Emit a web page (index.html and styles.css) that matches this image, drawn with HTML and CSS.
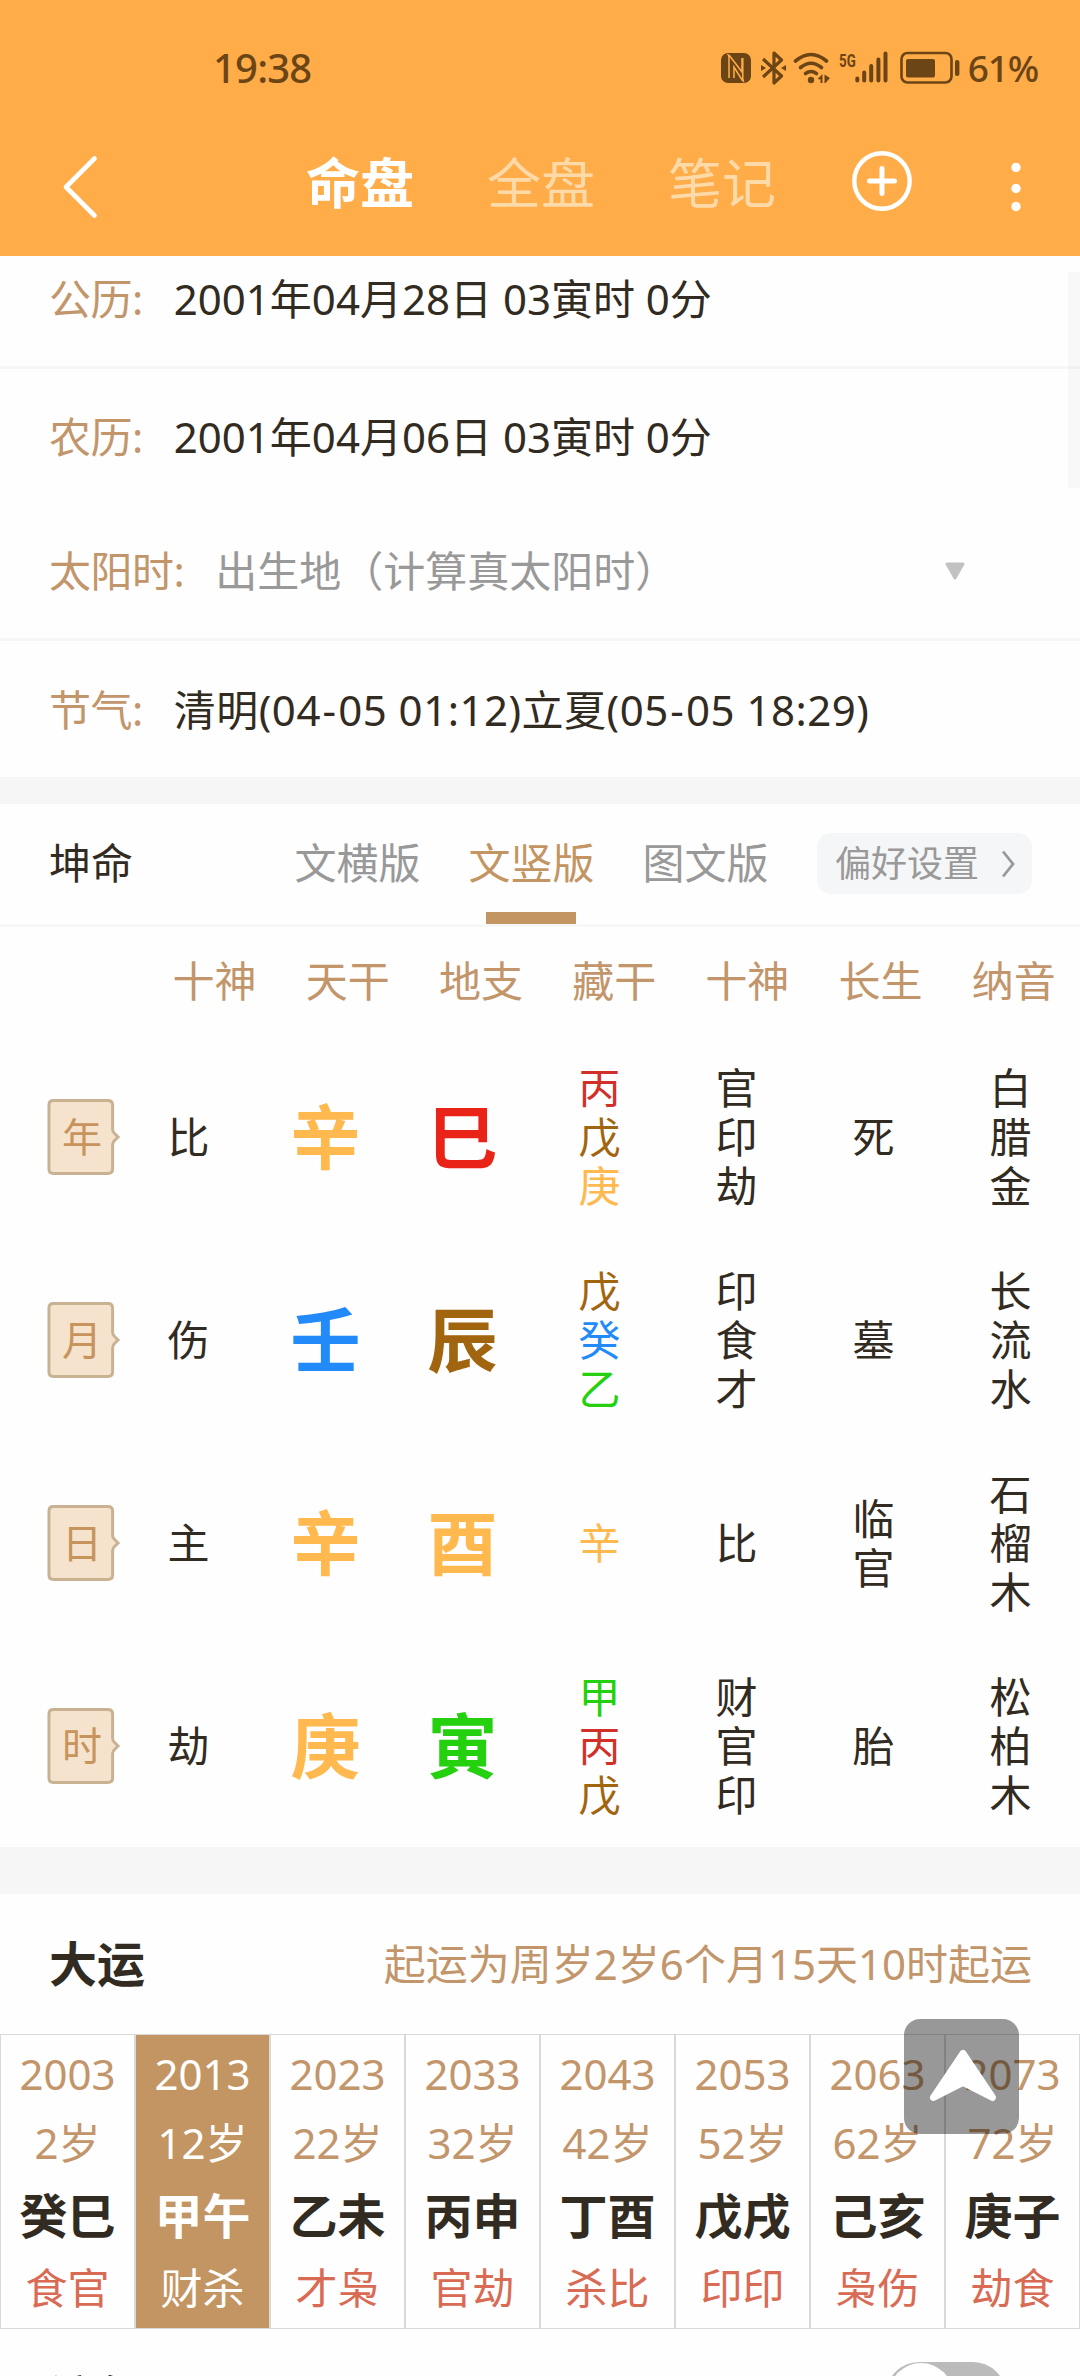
FILE: index.html
```html
<!DOCTYPE html>
<html lang="zh-CN">
<head>
<meta charset="utf-8">
<title>命盘</title>
<link rel="stylesheet" href="styles.css">
</head>
<body>
<div class="screen">
  <header class="header">
    <div class="status">
      <span class="clock">19:38</span>
      <div class="status-icons">
        <svg class="nfc" width="30" height="30" viewBox="0 0 30 30"><rect width="30" height="30" rx="7" fill="#6b4515"/><path d="M6.500 1Q8 2 8 5V25M8 2L21 19V5M23 29Q21.800 28 21.800 25V5M21.800 28L13 14V25" fill="none" stroke="#ffac49" stroke-width="1.500"/></svg>
        <svg class="bt" width="26" height="34" viewBox="0 0 26 34"><path d="M2 8L20.500 25L13 32V2L20.500 9L2 26" fill="none" stroke="#6b4515" stroke-width="3.200" stroke-linejoin="round"/><path d="M0 14L5 17L0 20ZM25 14L20 17L25 20Z" fill="#6b4515"/></svg>
        <svg class="wifi" width="40" height="34" viewBox="0 0 40 34"><g fill="none" stroke="#6b4515" stroke-width="3.600" stroke-linecap="round"><path d="M2.500 10Q18 -3 33.500 10"/><path d="M7.500 16.500Q18 8 28.500 16.500"/><path d="M12.500 22.500Q18 18.500 23.500 22.500"/></g><circle cx="18" cy="29" r="3.200" fill="#6b4515"/><path d="M24.500 28L29.500 23V32H27.500V28.500ZM31.500 23.500L37 27L32.500 32H31.500Z" fill="#6b4515"/></svg>
        <span class="net">5G</span>
        <svg class="signal" width="33" height="32" viewBox="0 0 33 32"><path d="M2.300 27.500V29.500M9.200 21.500V29.500M16.200 15V29.500M23.400 8.500V29.500M30.500 2.500V29.500" stroke="#6b4515" stroke-width="4" stroke-linecap="round"/></svg>
        <svg class="battery" width="60" height="34" viewBox="0 0 60 34"><rect x="1.500" y="2" width="50" height="29.500" rx="6" fill="none" stroke="#6b4515" stroke-width="2.600"/><rect x="6" y="8" width="29" height="18.500" rx="2" fill="#6b4515"/><rect x="55" y="9" width="4.400" height="16" rx="2" fill="#6b4515"/></svg>
        <span class="percent">61%</span>
      </div>
    </div>
    <nav class="nav">
      <svg class="back" width="40" height="66" viewBox="0 0 40 66"><path d="M34.500 4.500L6 33L34.500 61.500" fill="none" stroke="#fff" stroke-width="4.600" stroke-linecap="round" stroke-linejoin="round"/></svg>
      <div class="tabs"><span class="tab active">命盘</span><span class="tab">全盘</span><span class="tab">笔记</span></div>
      <svg class="add" width="60" height="60" viewBox="0 0 60 60"><circle cx="30" cy="30" r="27.700" fill="none" stroke="#fff" stroke-width="4.400"/><path d="M17.500 30H42.500M30 17.500V42.500" stroke="#fff" stroke-width="5" stroke-linecap="round"/></svg>
      <svg class="more" width="12" height="60" viewBox="0 0 12 60"><g fill="#fff"><circle cx="6" cy="16.500" r="4.700"/><circle cx="6" cy="37.500" r="4.700"/><circle cx="6" cy="55.500" r="4.700"/></g></svg>
    </nav>
  </header>

  <section class="info">
    <div class="row solar"><span class="label">公历:</span><span>2001年04月28日 03寅时 0分</span></div>
    <div class="row lunar"><span class="label">农历:</span><span>2001年04月06日 03寅时 0分</span></div>
    <div class="row sun"><span class="label">太阳时:</span><span class="hint">出生地（计算真太阳时）</span>
      <svg class="caret" width="20" height="18" viewBox="0 0 20 18"><path d="M2 2H18L10 16Z" fill="#c2c2c2" stroke="#c2c2c2" stroke-width="3" stroke-linejoin="round"/></svg></div>
    <div class="row term"><span class="label">节气:</span><span class="term-value">清明(04<i>-</i>05 01:12)立夏(05<i>-</i>05 18:29)</span></div>
    <div class="scrollbar"></div>
  </section>

  <section class="chart">
    <div class="modes">
      <span class="who">坤命</span>
      <div class="mode-tabs"><span class="mode">文横版</span><span class="mode active">文竖版</span><span class="mode">图文版</span></div>
      <div class="prefs"><span>偏好设置</span><svg width="16" height="30" viewBox="0 0 16 30"><path d="M2 2.500L12 15L2 27.500" fill="none" stroke="#999" stroke-width="2.800"/></svg></div>
    </div>
    <div class="heads"><span>十神</span><span>天干</span><span>地支</span><span>藏干</span><span>十神</span><span>长生</span><span>纳音</span></div>
    <div class="pillar">
      <div class="tag"><svg width="74" height="76" viewBox="0 0 74 77"><path d="M6 1.500H61Q66 1.500 66 6V31Q66 33.500 68 35L71.500 38.500L68 42Q66 43.500 66 46V71Q66 75.500 61 75.500H6Q1.500 75.500 1.500 71V6Q1.500 1.500 6 1.500Z"/></svg><span>年</span></div>
      <span>比</span><b class="gold">辛</b><b class="red">巳</b><span><i class="red2">丙</i><i class="brown">戊</i><i class="gold">庚</i></span><span>官印劫</span><span>死</span><span>白腊金</span>
    </div>
    <div class="pillar">
      <div class="tag"><svg width="74" height="76" viewBox="0 0 74 77"><path d="M6 1.500H61Q66 1.500 66 6V31Q66 33.500 68 35L71.500 38.500L68 42Q66 43.500 66 46V71Q66 75.500 61 75.500H6Q1.500 75.500 1.500 71V6Q1.500 1.500 6 1.500Z"/></svg><span>月</span></div>
      <span>伤</span><b class="blue">壬</b><b class="brown">辰</b><span><i class="brown">戊</i><i class="blue">癸</i><i class="green">乙</i></span><span>印食才</span><span>墓</span><span>长流水</span>
    </div>
    <div class="pillar">
      <div class="tag"><svg width="74" height="76" viewBox="0 0 74 77"><path d="M6 1.500H61Q66 1.500 66 6V31Q66 33.500 68 35L71.500 38.500L68 42Q66 43.500 66 46V71Q66 75.500 61 75.500H6Q1.500 75.500 1.500 71V6Q1.500 1.500 6 1.500Z"/></svg><span>日</span></div>
      <span>主</span><b class="gold">辛</b><b class="gold">酉</b><span><i class="gold">辛</i></span><span>比</span><span>临官</span><span>石榴木</span>
    </div>
    <div class="pillar">
      <div class="tag"><svg width="74" height="76" viewBox="0 0 74 77"><path d="M6 1.500H61Q66 1.500 66 6V31Q66 33.500 68 35L71.500 38.500L68 42Q66 43.500 66 46V71Q66 75.500 61 75.500H6Q1.500 75.500 1.500 71V6Q1.500 1.500 6 1.500Z"/></svg><span>时</span></div>
      <span>劫</span><b class="gold">庚</b><b class="green">寅</b><span><i class="green">甲</i><i class="red2">丙</i><i class="brown">戊</i></span><span>财官印</span><span>胎</span><span>松柏木</span>
    </div>
  </section>

  <section class="luck">
    <div class="luck-head"><h2>大运</h2><span>起运为周岁2岁6个月15天10时起运</span></div>
    <div class="decades">
      <div class="decade"><span>2003</span><span>2岁</span><b>癸巳</b><em>食官</em></div>
      <div class="decade current"><span>2013</span><span>12岁</span><b>甲午</b><em>财杀</em></div>
      <div class="decade"><span>2023</span><span>22岁</span><b>乙未</b><em>才枭</em></div>
      <div class="decade"><span>2033</span><span>32岁</span><b>丙申</b><em>官劫</em></div>
      <div class="decade"><span>2043</span><span>42岁</span><b>丁酉</b><em>杀比</em></div>
      <div class="decade"><span>2053</span><span>52岁</span><b>戊戌</b><em>印印</em></div>
      <div class="decade"><span>2063</span><span>62岁</span><b>己亥</b><em>枭伤</em></div>
      <div class="decade"><span>2073</span><span>72岁</span><b>庚子</b><em>劫食</em></div>
    </div>
    <div class="next"><h2>流年</h2><div class="toggle"></div></div>
  </section>

  <div class="to-top"><svg width="115" height="115" viewBox="0 0 115 115"><path d="M59 34.500L29.500 78.500L59 63.500L88.500 78.500Z" fill="#fff" stroke="#fff" stroke-width="7" stroke-linejoin="round"/></svg></div>
</div>
</body>
</html>
```
FILE: styles.css
```css
* { box-sizing: border-box; }
body {
  margin: 0;
  background: #fefefe;
  color: #322b21;
  font: 42px/50px "Noto Sans", "Noto Sans CJK SC", sans-serif;
}
.screen { position: relative; width: 1080px; height: 2376px; overflow: hidden; }
span, b { white-space: nowrap; }
i, em { font-style: normal; }

.header { height: 256px; background: #ffac49; }
.status { height: 136px; padding: 43px 42px 0 213px; display: flex; justify-content: space-between; color: #6b4515; }
.clock { font-size: 40px; letter-spacing: -.800px; font-weight: 500; }
.status-icons { display: flex; align-items: flex-start; padding-top: 8px; }
.nfc { margin: 2px 10px 0 0; }
.bt { margin-right: 6px; }
.wifi { margin: 0 6px 0 0; }
.net { font: bold 19px/20px "Roboto", sans-serif; width: 16px; transform: scaleX(.7); transform-origin: 0 0; }
.signal { margin: 0 12px 0 0; }
.battery { margin: 0 8px 0 0; }
.percent { font-size: 37px; line-height: 50px; letter-spacing: -1.200px; margin-top: -8px; font-weight: 500; }
.nav { height: 120px; display: flex; align-items: flex-start; padding-left: 60px; }
.back { margin-top: 18px; }
.tabs { display: flex; gap: 73px; margin: 5px 0 0 206px; width: 546px; font: 54px/80px "Noto Sans CJK SC", sans-serif; color: #ffdaa9; }
.tab.active { color: #fff; font-weight: 700; }
.add { margin-top: 15px; }
.more { margin: 15px 0 0 98px; }

.info { position: relative; height: 548px; border-bottom: 27px solid #f6f6f6; }
.row { display: flex; align-items: center; padding: 0 49px; gap: 31px; }
.label { color: #c2956a; letter-spacing: -.500px; }
.hint { color: #999; }
.solar { height: 113px; border-bottom: 3px solid #f7f7f7; padding-bottom: 24px; }
.lunar { height: 136px; }
.sun { height: 136px; border-bottom: 3px solid #f7f7f7; padding-bottom: 2px; }
.caret { margin: 0 66px 0 auto; }
.term { height: 136px; padding-top: 2px; }
.term-value { letter-spacing: .500px; }
.term-value i { padding: 0 1.600px; }
.scrollbar { position: absolute; right: 0; top: 16px; width: 12px; height: 216px; background: rgba(0, 0, 0, .025); }

.chart { height: 1090px; border-bottom: 47px solid #f6f6f6; }
.modes { height: 123px; border-bottom: 3px solid #f7f7f7; display: flex; padding: 0 48px 0 49px; justify-content: space-between; }
.who { line-height: 118px; }
.mode-tabs { display: flex; gap: 48px; width: 474px; margin-left: 113px; line-height: 118px; color: #999; }
.mode.active { position: relative; color: #c39563; }
.mode.active::after { content: ""; position: absolute; left: 17px; bottom: 0; width: 90px; height: 12px; background: #c39563; }
.prefs { width: 215px; height: 61px; margin-top: 29px; padding: 0 15px 0 18px; border-radius: 14px; background: #f5f6f7; color: #999; font-size: 36px; display: flex; align-items: center; justify-content: space-between; }
.heads { height: 108px; padding: 29px 0 0 148px; display: grid; grid-template-columns: repeat(7, 133.200px); text-align: center; color: #c2956a; }
.pillar { height: 203px; display: grid; grid-template-columns: 120px repeat(7, 137px); align-items: center; justify-items: center; }
.pillar > span { width: 42px; line-height: 49px; white-space: normal; word-break: break-all; }
.pillar i { display: block; }
.pillar b { font-size: 70px; line-height: 80px; }
.tag { position: relative; width: 74px; height: 76px; justify-self: start; margin-left: 47px; }
.tag svg { position: absolute; left: 0; top: 0; fill: #f6e3cd; stroke: #c8b292; stroke-width: 3; }
.tag span { position: relative; display: block; width: 70px; text-align: center; font-size: 40px; line-height: 76px; color: #c6945c; }
.gold { color: #ffb94e; }
.red { color: #ea2318; }
.red2 { color: #d22f29; }
.blue { color: #238af9; }
.brown { color: #a2650f; }
.green { color: #25d00e; }

h2 { margin: 0; font-size: 48px; line-height: 60px; color: #322b21; }
.luck-head { height: 140px; padding: 0 48px 0 49px; display: flex; align-items: center; justify-content: space-between; color: #c2956a; }
.decades { height: 295px; display: grid; grid-template-columns: repeat(8, 135px); }
.decade { border: 1px solid #d9d9d9; display: flex; flex-direction: column; align-items: center; color: #c2956a; padding-top: 14px; }
.decade > * { line-height: 50px; margin-bottom: 19px; }
.decade b { font-size: 48px; line-height: 60px; color: #322b21; margin: -1px 0 17px; }
.decade em { color: #d96b54; margin: 0; }
.decade.current { background: #c39563; }
.decade.current > * { color: #fff; }
.next { height: 130px; padding: 33px 74px 0 49px; display: flex; justify-content: space-between; }
.next h2 { margin-top: 6px; }
.toggle { width: 120px; height: 66px; border-radius: 33px; background: #bbb; padding: 1px 3px; }
.toggle::before { content: ""; display: block; width: 64px; height: 64px; border-radius: 50%; background: #fff; }
.to-top { position: absolute; left: 904px; top: 2019px; width: 115px; height: 115px; border-radius: 16px; background: rgba(0, 0, 0, .4); }
.to-top svg { display: block; }
```
